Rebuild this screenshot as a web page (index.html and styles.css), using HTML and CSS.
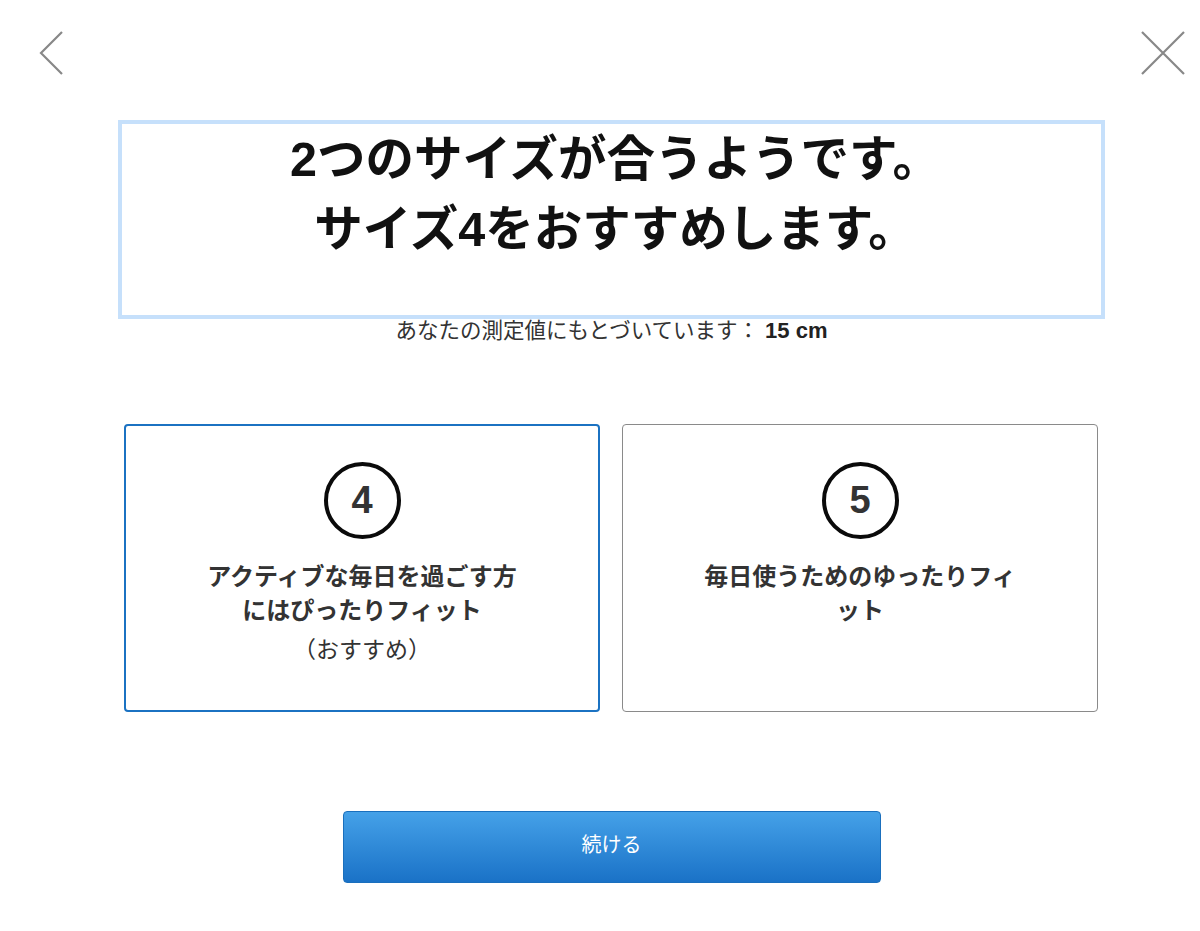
FILE: index.html
```html
<!DOCTYPE html>
<html lang="ja">
<head>
<meta charset="utf-8">
<title>サイズ</title>
<link rel="stylesheet" href="styles.css">
</head>
<body>
<header class="topbar">
  <button class="icon-btn" aria-label="戻る">
    <svg width="24" height="44" viewBox="0 0 24 44"><polyline points="23,1 2,22 23,43" fill="none" stroke="#888" stroke-width="2.2"/></svg>
  </button>
  <button class="icon-btn" aria-label="閉じる">
    <svg width="44" height="44" viewBox="0 0 44 44"><path d="M1 1 L43 43 M43 1 L1 43" fill="none" stroke="#888" stroke-width="2.2"/></svg>
  </button>
</header>
<main class="content">
  <h1 class="headline">2つのサイズが合うようです。<br>サイズ4をおすすめします。</h1>
  <p class="basis">あなたの測定値にもとづいています：<strong class="value">15 cm</strong></p>
  <div class="cards">
    <div class="card selected">
      <div class="circle">4</div>
      <p class="card-text">アクティブな毎日を過ごす方にはぴったりフィット</p>
      <p class="card-note">（おすすめ）</p>
    </div>
    <div class="card">
      <div class="circle">5</div>
      <p class="card-text">毎日使うためのゆったりフィット</p>
    </div>
  </div>
  <div class="actions">
    <button class="primary">続ける</button>
  </div>
</main>
</body>
</html>
```
FILE: styles.css
```css
html, body {
  margin: 0;
  padding: 0;
  background: #fff;
}
body {
  font-family: "Liberation Sans", "Noto Sans CJK JP", sans-serif;
  color: #222;
  width: 1200px;
  height: 931px;
  overflow: hidden;
}
.topbar {
  display: flex;
  justify-content: space-between;
  align-items: flex-start;
  padding: 31px 15px 0 39px;
  height: 89px;
}
.icon-btn {
  border: 0;
  background: none;
  padding: 0;
  margin: 0;
  line-height: 0;
}
.content {
  margin-left: 118px;
  width: 987px;
}
.headline {
  margin: 0;
  border: 4px solid #c6e0fb;
  padding: 0 0 51px 8px;
  font-size: 48.5px;
  line-height: 70px;
  font-weight: 700;
  text-align: center;
  color: #111;
  font-family: "Liberation Sans", "Noto Sans CJK JP", sans-serif;
}
.basis {
  margin: 0;
  height: 24px;
  text-align: center;
  font-size: 21.5px;
  line-height: 20px;
  color: #333;
  font-family: "Noto Sans CJK JP", sans-serif;
}
.value {
  font-family: "Liberation Sans", sans-serif;
  font-weight: 700;
  font-size: 22px;
  color: #222;
  margin-left: 6px;
}
.cards {
  display: grid;
  grid-template-columns: 476px 476px;
  gap: 22px;
  margin: 81px 6px 0;
}
.card {
  box-sizing: border-box;
  height: 288px;
  border: 1px solid #8a8a8a;
  border-radius: 4px;
  display: flex;
  flex-direction: column;
  align-items: center;
  padding-top: 37px;
}
.card.selected {
  border: 2px solid #1b72c2;
  padding-top: 36px;
}
.circle {
  box-sizing: border-box;
  width: 77px;
  height: 77px;
  border: 4px solid #0a0a0a;
  border-radius: 50%;
  display: flex;
  align-items: center;
  justify-content: center;
  font-family: "Liberation Sans", sans-serif;
  font-weight: 700;
  font-size: 38px;
  color: #333;
}
.card-text {
  margin: 19px 0 0;
  width: 322px;
  text-align: center;
  font-family: "Noto Sans CJK JP", sans-serif;
  font-weight: 700;
  font-size: 24px;
  line-height: 34px;
  color: #333;
}
.card-note {
  margin: 5px 0 0;
  text-align: center;
  font-family: "Noto Sans CJK JP", sans-serif;
  font-size: 23px;
  line-height: 34px;
  color: #333;
}
.actions {
  display: flex;
  justify-content: center;
  margin-top: 99px;
}
.primary {
  width: 538px;
  height: 72px;
  border: 1px solid #1a6fbd;
  border-radius: 4px;
  background: linear-gradient(#45a1e8, #1a72c7);
  color: #fff;
  font-family: "Noto Sans CJK JP", sans-serif;
  font-size: 20px;
  padding: 0 0 8px;
}
```
